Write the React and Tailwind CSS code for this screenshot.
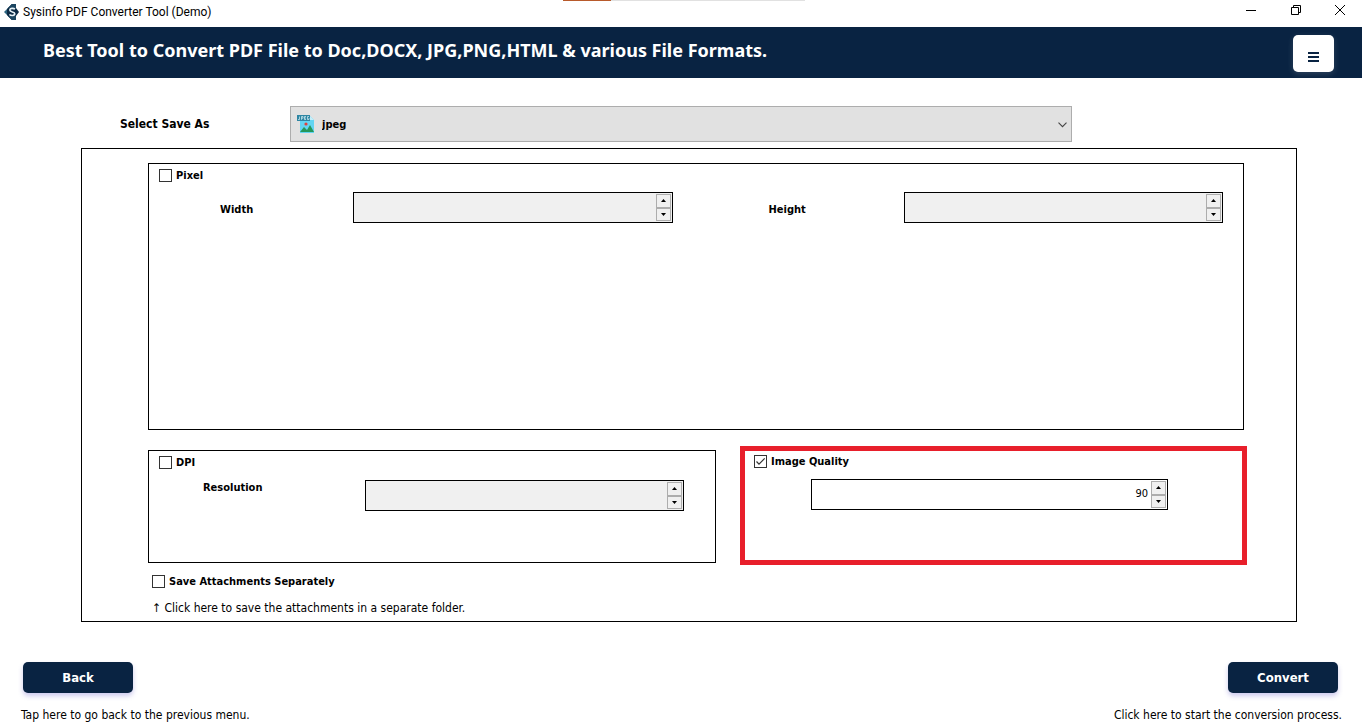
import { useState } from "react";

const UI_FONT = "font-['DejaVu_Sans_Condensed','DejaVu_Sans',sans-serif]";

function AppLogo() {
  return (
    <svg viewBox="0 0 16 16" className="h-4 w-4" aria-hidden="true">
      <path d="M8 0 0 8l8 8z" fill="#2c6480" />
      <path d="M8 0h4v4l3 4-3 4v4H8L3 11V5z" fill="#0d2b45" />
      <path d="M8 0 4 4h8V0zM8 16l-4-4h8v4z" fill="#1c4560" />
      <path d="M11 5.200C9.500 3.900 5.800 4 5.800 6.100c0 2.300 5 1.300 5 3.700 0 2-3.800 2.200-5.400.7" fill="none" stroke="#e8f2f7" strokeWidth="1.600" />
    </svg>
  );
}

function JpegIcon() {
  return (
    <svg viewBox="0 0 18 18" className="h-[18px] w-[18px]" aria-hidden="true">
      <path d="M3 1h10l4 4v13H3z" fill="#62d5f2" />
      <path d="M13 1v4h4z" fill="#c4eefa" />
      <circle cx="9" cy="9" r="1.600" fill="#e0413c" />
      <path d="M3 17l4-5 3 3 3-5 4 7z" fill="#25975a" />
      <rect x="0" y="0" width="13" height="6" fill="#2e86a3" />
      <path d="M2.500 1.500v3H1M4.500 4.800V1.500h1.500v1.700H4.500M9 1.500H7.500v3H9M7.500 3H9M12 1.500h-1.500v3H12V3" fill="none" stroke="#d9f0f7" strokeWidth=".7" />
    </svg>
  );
}

function Check({ id, label, checked, onChange }) {
  return (
    <div className="flex h-4 items-start gap-1">
      <span className="relative mt-px flex">
        <input
          id={id}
          type="checkbox"
          checked={checked}
          onChange={(e) => onChange(e.target.checked)}
          className="peer h-[13px] w-[13px] appearance-none border border-[#333] bg-white"
        />
        <svg viewBox="0 0 13 13" className="pointer-events-none invisible absolute inset-0 h-[13px] w-[13px] peer-checked:visible" aria-hidden="true">
          <path d="M2.500 6.500 5 9.200 10.700 3.300" fill="none" stroke="#333" strokeWidth="1.200" />
        </svg>
      </span>
      <label htmlFor={id} className="text-[11px] leading-4 font-bold">{label}</label>
    </div>
  );
}

function StepButton({ up, disabled, onClick }) {
  return (
    <button
      type="button"
      aria-label={up ? "Increase" : "Decrease"}
      disabled={disabled}
      onClick={onClick}
      className="flex w-[15px] flex-1 items-center justify-center border border-[#adadad] bg-[#f0f0f0]"
    >
      <svg viewBox="0 0 5 3" className="h-[3px] w-[5px]" aria-hidden="true">
        <path d={up ? "M0 3 2.500 0 5 3z" : "M0 0h5L2.500 3z"} fill="#000" />
      </svg>
    </button>
  );
}

function Spinner({ id, value, onChange, disabled, label }) {
  const step = (d) => onChange(String(Number(value || 0) + d));
  return (
    <div className={`flex h-[31px] min-w-0 flex-1 border border-black p-px ${disabled ? "bg-[#f0f0f0]" : "bg-white"}`}>
      <input
        id={id}
        type="number"
        aria-label={label}
        value={value}
        disabled={disabled}
        onChange={(e) => onChange(e.target.value)}
        className="min-w-0 flex-1 bg-transparent pr-[3px] text-right text-[11px] outline-none [appearance:textfield] [&::-webkit-inner-spin-button]:appearance-none"
      />
      <div className="flex flex-col">
        <StepButton up disabled={disabled} onClick={() => step(1)} />
        <StepButton disabled={disabled} onClick={() => step(-1)} />
      </div>
    </div>
  );
}

function TitleBar() {
  return (
    <div className="relative flex h-[27px] items-start bg-white pl-1">
      <div className="absolute top-0 left-[563px] flex h-px w-[242px] bg-[#e1e1e1]">
        <span className="w-12 bg-[#b85a2b]" />
      </div>
      <div className="flex h-6 flex-1 items-center gap-[3px]">
        <AppLogo />
        <span className="font-['Roboto','Open_Sans',sans-serif] text-[12px] leading-6">Sysinfo PDF Converter Tool (Demo)</span>
      </div>
      <div className="flex h-5">
        <button type="button" aria-label="Minimize" className="flex w-[45px] items-center justify-center">
          <svg viewBox="0 0 10 10" className="h-[10px] w-[10px]"><path d="M0 5.500h10" stroke="#000" /></svg>
        </button>
        <button type="button" aria-label="Restore" className="flex w-[45px] items-center justify-center">
          <svg viewBox="0 0 10 10" className="h-[10px] w-[10px]"><path d="M.5 2.500h7v7h-7zM2.500 2.500v-2h7v7h-2" fill="none" stroke="#000" /></svg>
        </button>
        <button type="button" aria-label="Close" className="flex w-11 items-center justify-center">
          <svg viewBox="0 0 10 10" className="h-[10px] w-[10px]"><path d="m0 0 10 10M10 0 0 10" stroke="#000" /></svg>
        </button>
      </div>
    </div>
  );
}

export default function App() {
  const [format, setFormat] = useState("jpeg");
  const [pixel, setPixel] = useState(false);
  const [dpi, setDpi] = useState(false);
  const [quality, setQuality] = useState(true);
  const [separate, setSeparate] = useState(false);
  const [width, setWidth] = useState("");
  const [height, setHeight] = useState("");
  const [resolution, setResolution] = useState("");
  const [qualityValue, setQualityValue] = useState("90");

  return (
    <div className={`flex min-h-screen flex-col bg-white text-[11px] text-black ${UI_FONT}`}>
      <TitleBar />
      <header className="flex h-[51px] items-center justify-between bg-[#092342] pt-px pr-7 pl-[43px]">
        <h1 className="pb-[6px] font-['Noto_Sans','Open_Sans',sans-serif] text-[18px] leading-6 font-bold text-white">
          Best Tool to Convert PDF File to Doc,DOCX, JPG,PNG,HTML &amp; various File Formats.
        </h1>
        <button type="button" aria-label="Menu" className="flex h-[37px] w-[41px] items-center justify-center rounded-[5px] bg-white pt-[7px] shadow-[0_2px_6px_rgba(255,255,255,0.15)]">
          <svg viewBox="0 0 11 10" className="h-[10px] w-[11px]"><path d="M0 1h11M0 5h11M0 9h11" stroke="#092342" strokeWidth="2" /></svg>
        </button>
      </header>

      <main className="pt-7 pr-[65px] pl-[81px]">
        <div className="flex items-center pr-[225px] pl-[39px]">
          <label htmlFor="format" className="w-[170px] text-[12px] leading-4 font-bold">Select Save As</label>
          <div className="relative flex-1">
            <select
              id="format"
              value={format}
              onChange={(e) => setFormat(e.target.value)}
              className="block h-9 w-full appearance-none border border-[#adadad] bg-[#e1e1e1] pt-[2px] pl-[31px] text-[11px] font-bold"
            >
              <option value="jpeg">jpeg</option>
            </select>
            <span className="pointer-events-none absolute top-[9px] left-[7px]"><JpegIcon /></span>
            <svg viewBox="0 0 9 6" className="pointer-events-none absolute top-4 right-[5px] h-[6px] w-[9px]" aria-hidden="true">
              <path d="m.5.7 4 4 4-4" fill="none" stroke="#444" strokeWidth="1.100" />
            </svg>
          </div>
        </div>

        <section className="mt-[6px] border border-black pt-[14px] pr-[49px] pb-[3px] pl-[66px]">
          <div className="mr-[3px] h-[267px] border border-black pt-1 pr-5 pl-[10px]">
            <Check id="pixel" label="Pixel" checked={pixel} onChange={setPixel} />
            <div className="mt-2 flex pl-[61px] leading-9">
              <label htmlFor="width" className="w-[133px] shrink-0 font-bold">Width</label>
              <Spinner id="width" value={width} onChange={setWidth} disabled={!pixel} />
              <label htmlFor="height" className="ml-24 w-[135px] shrink-0 font-bold">Height</label>
              <Spinner id="height" value={height} onChange={setHeight} disabled={!pixel} />
            </div>
          </div>

          <div className="mt-4 grid h-[119px] grid-cols-[568fr_507fr] gap-6">
            <div className="mt-1 mb-[2px] border border-black pt-1 pr-[31px] pl-[10px]">
              <Check id="dpi" label="DPI" checked={dpi} onChange={setDpi} />
              <div className="mt-[9px] flex pl-11">
                <label htmlFor="resolution" className="w-[162px] leading-4 font-bold">Resolution</label>
                <Spinner id="resolution" value={resolution} onChange={setResolution} disabled={!dpi} />
              </div>
            </div>
            <div className="border-[5px] border-[#e81f2b] pt-[3px] pr-[74px] pl-[9px]">
              <Check id="quality" label="Image Quality" checked={quality} onChange={setQuality} />
              <div className="mt-[9px] flex pl-[57px]">
                <Spinner id="quality-value" label="Image quality value" value={qualityValue} onChange={setQualityValue} disabled={!quality} />
              </div>
            </div>
          </div>

          <div className="mt-[9px] pl-1">
            <Check id="separate" label="Save Attachments Separately" checked={separate} onChange={setSeparate} />
            <p className="mt-2 text-[12px] leading-5">↑ Click here to save the attachments in a separate folder.</p>
          </div>
        </section>
      </main>

      <footer className="mt-10 flex justify-between pr-5 pl-[21px] text-[12px]">
        <div>
          <button type="button" className="ml-[2px] block h-[31px] w-[110px] rounded-[5px] bg-[#092342] text-[13px] font-bold text-white shadow-[0_3px_5px_rgba(90,80,200,0.3)]">Back</button>
          <p className="mt-3 leading-5">Tap here to go back to the previous menu.</p>
        </div>
        <div className="flex flex-col items-end">
          <button type="button" className="mr-1 block h-[31px] w-[110px] rounded-[5px] bg-[#092342] text-[13px] font-bold text-white shadow-[0_3px_5px_rgba(90,80,200,0.3)]">Convert</button>
          <p className="mt-3 leading-5">Click here to start the conversion process.</p>
        </div>
      </footer>
    </div>
  );
}
